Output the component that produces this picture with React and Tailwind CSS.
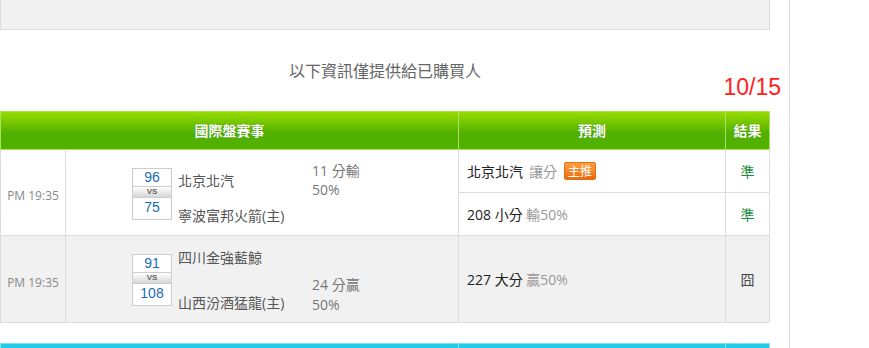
const font = { fontFamily: '"Open Sans", "Noto Sans CJK TC", sans-serif' };
const boxFont = { fontFamily: '"Liberation Sans", sans-serif' };

function ScoreBox({ top, bottom, className }) {
    return (
        <div className={"w-[40px] h-[52px] border border-[#cccccc] bg-white text-center " + className} style={boxFont}>
            <div className="h-[17px] leading-[17px] text-[14px] text-[#1a6cb0]">{top}</div>
            <div className="h-[12px] leading-[10px] border-y border-[#cccccc] bg-linear-to-b from-white to-[#d6d6d6] text-[8px] font-bold text-[#666]">
                VS
            </div>
            <div className="h-[19px] leading-[19px] text-[14px] text-[#1a6cb0]">{bottom}</div>
        </div>
    );
}

export default function App() {
    return (
        <div className="flex min-h-screen bg-white" style={font}>
            {/* main column */}
            <div className="w-[790px] border-r border-[#dddddd]">
                {/* previous box */}
                <div className="w-[770px] h-[30px] bg-[#f1f1f1] border-x border-b border-[#dddddd]"></div>

                {/* notice */}
                <div className="w-[770px] pt-[29px] text-center text-[16px] leading-6 text-[#666]">
                    以下資訊僅提供給已購買人
                </div>
                <div className="-mt-[9px] pr-[8px] h-[37px] text-right text-[23px] leading-[26px] text-[#ff2020]" style={boxFont}>
                    10/15
                </div>

                {/* table */}
                <table className="w-[769px] table-fixed border-collapse">
                    <colgroup>
                        <col className="w-[65px]" />
                        <col className="w-[393px]" />
                        <col className="w-[267px]" />
                        <col className="w-[44px]" />
                    </colgroup>
                    <thead>
                        <tr className="h-[38px] bg-linear-to-b from-[#97dc00] from-0% to-[#52b000] to-55% text-white text-[14px] font-bold">
                            <th colSpan={2} className="border border-[#a8e25e] font-bold [text-shadow:0_0_1px_rgba(0,80,0,0.5)]">國際盤賽事</th>
                            <th className="border border-[#a8e25e] font-bold [text-shadow:0_0_1px_rgba(0,80,0,0.5)]">預測</th>
                            <th className="border border-[#a8e25e] font-bold [text-shadow:0_0_1px_rgba(0,80,0,0.5)]">結果</th>
                        </tr>
                    </thead>
                    <tbody className="text-[14px]">
                        {/* match 1 */}
                        <tr className="h-[43px]">
                            <td rowSpan={2} className="border border-[#dddddd] pt-[7px] text-center text-[12px] text-[#888]">PM 19:35</td>
                            <td rowSpan={2} className="border border-[#dddddd] p-0 align-top">
                                <div className="flex items-start h-[85px] pl-[66px]">
                                    <ScoreBox top="96" bottom="75" className="mt-[18px]" />
                                    <div className="ml-[6px] w-[134px] text-[#555] leading-[18px]">
                                        <div className="mt-[22px]">北京北汽</div>
                                        <div className="mt-[17px]">寧波富邦火箭(主)</div>
                                    </div>
                                    <div className="mt-[11px] leading-[19px] text-[#777]">
                                        <div>11 分輸</div>
                                        <div>50%</div>
                                    </div>
                                </div>
                            </td>
                            <td className="border border-[#dddddd] pl-[8px] text-[#222]">
                                <div className="flex items-center">
                                    北京北汽 <span className="ml-[6px] text-[#999]">讓分</span>
                                    <span className="ml-[7px] px-[3px] h-[18px] leading-[17px] rounded-[2px] border border-[#e57010] bg-linear-to-b from-[#ffa040] to-[#ec6a0c] text-[12px] text-white">主推</span>
                                </div>
                            </td>
                            <td className="border border-[#dddddd] text-center text-[#1a8c3c]">準</td>
                        </tr>
                        <tr className="h-[43px]">
                            <td className="border border-[#dddddd] pl-[8px] text-[#222]">
                                208 小分 <span className="text-[#999]">輸50%</span>
                            </td>
                            <td className="border border-[#dddddd] text-center text-[#1a8c3c]">準</td>
                        </tr>

                        {/* match 2 */}
                        <tr className="h-[87px] bg-[#f1f1f1]">
                            <td className="border border-[#dddddd] pt-[7px] text-center text-[12px] text-[#888]">PM 19:35</td>
                            <td className="border border-[#dddddd] p-0 align-top">
                                <div className="flex items-start h-[86px] pl-[66px]">
                                    <ScoreBox top="91" bottom="108" className="mt-[18px]" />
                                    <div className="ml-[6px] w-[134px] text-[#555] leading-[18px]">
                                        <div className="mt-[13px]">四川金強藍鯨</div>
                                        <div className="mt-[27px]">山西汾酒猛龍(主)</div>
                                    </div>
                                    <div className="mt-[39px] leading-[20px] text-[#777]">
                                        <div>24 分贏</div>
                                        <div>50%</div>
                                    </div>
                                </div>
                            </td>
                            <td className="border border-[#dddddd] pl-[8px] text-[#222]">
                                227 大分 <span className="text-[#999]">贏50%</span>
                            </td>
                            <td className="border border-[#dddddd] text-center text-[#444]">囧</td>
                        </tr>
                    </tbody>
                </table>

                {/* next table header */}
                <table className="mt-[20px] w-[769px] table-fixed border-collapse">
                    <colgroup>
                        <col className="w-[65px]" />
                        <col className="w-[393px]" />
                        <col className="w-[267px]" />
                        <col className="w-[44px]" />
                    </colgroup>
                    <thead>
                        <tr className="h-[38px] bg-[#22cde8]">
                            <th colSpan={2} className="border border-[#7fe3f3]"></th>
                            <th className="border border-[#7fe3f3]"></th>
                            <th className="border border-[#7fe3f3]"></th>
                        </tr>
                    </thead>
                </table>
            </div>
        </div>
    );
}
